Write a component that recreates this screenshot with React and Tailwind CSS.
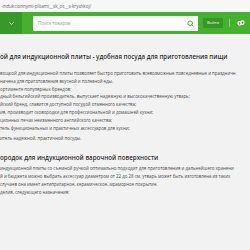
import { Search, ChevronDown } from "lucide-react";

const paragraphs = [
  "вощкой для индукционной плиты позволяет быстро приготовить всевозможные повседневные и праздничн",
  "начена для приготовления вкусной и полезной еды.",
  "ортименте популярных брендов:",
  "дный бельгийский производитель, выпускает надежную и высококачественную утварь;",
  "йский бренд, славится доступной посудой отменного качества;",
  "ия, производит сковородки для профессиональной и домашней кухни;",
  "ционных печах неизменного английского качества;",
  "тель функциональных и практичных аксессуаров для кухни;",
];

const second = [
  " индукционной плиты со съемной ручкой оптимально подходит для приготовления и дальнейшего хранени",
  "й и бюджета можно выбрать аксессуар диаметром от 22 до 28 см. утварь может быть изготовлена из таких",
  "случаев она имеет антипригарное, керамическое, мраморное покрытие.",
  "делия, следующего назначения:",
];

export default function App() {
  return (
    <div
      className="w-[250px] h-[250px] overflow-hidden bg-[#f2f2f2] text-[#555]"
      style={{ fontFamily: "'Open Sans', 'Noto Sans', sans-serif" }}
    >
      {/* address strip */}
      <div className="h-[12px] bg-[#f7f7f7] pl-[1px] text-[4.5px] leading-[12px] text-[#666] whitespace-nowrap">
        -indukcionnymi-plitami__sk_os__s-kryshkoj/
      </div>

      {/* header */}
      <div className="h-[22px] bg-[#45b22d] flex items-center">
        <div className="w-[22px] h-full bg-[#36992a] flex items-center justify-center">
          <ChevronDown size={7} strokeWidth={3} className="text-white" />
        </div>
        <div className="ml-[11px] w-[165px] h-[15px] bg-white flex items-center pl-[5px] pr-[4px]">
          <span className="flex-1 text-[4.5px] text-[#999]">Поиск товаров</span>
          <Search size={7} strokeWidth={3} className="text-[#45b22d]" />
        </div>
        <div className="ml-[5px] w-[20px] h-[10px] bg-[#35962a] rounded-[1px] flex items-center justify-center text-[4px] text-white">
          Войти
        </div>
        <div className="ml-[6px] w-px h-[8px] bg-[#8fd27e]" />
        <svg viewBox="0 0 12 12" className="ml-[7px] w-[8px] h-[8px]" fill="none" stroke="white" strokeWidth="1.8">
          <circle cx="4" cy="6.5" r="2.6" />
          <circle cx="8" cy="5.5" r="2.6" />
        </svg>
      </div>

      <div className="pt-[18px] whitespace-nowrap overflow-hidden">
        <h1 className="text-[6.2px] font-semibold text-[#333] leading-[10px]">
          ой для индукционной плиты - удобная посуда для приготовления пищи
        </h1>
        <div className="mt-[8px] text-[4.4px] leading-[7.8px] text-[#4a4a4a]">
          {paragraphs.map((p) => (
            <p key={p}>{p}</p>
          ))}
          <p className="mt-[3px]">итель надежной, практичной посуды.</p>
        </div>

        <h2 className="mt-[10px] text-[6.2px] font-semibold text-[#333] leading-[10px]">
          ородок для индукционной варочной поверхности
        </h2>
        <div className="mt-[2px] text-[4.4px] leading-[7.8px] text-[#4a4a4a]">
          {second.map((p) => (
            <p key={p}>{p}</p>
          ))}
        </div>
      </div>
    </div>
  );
}
